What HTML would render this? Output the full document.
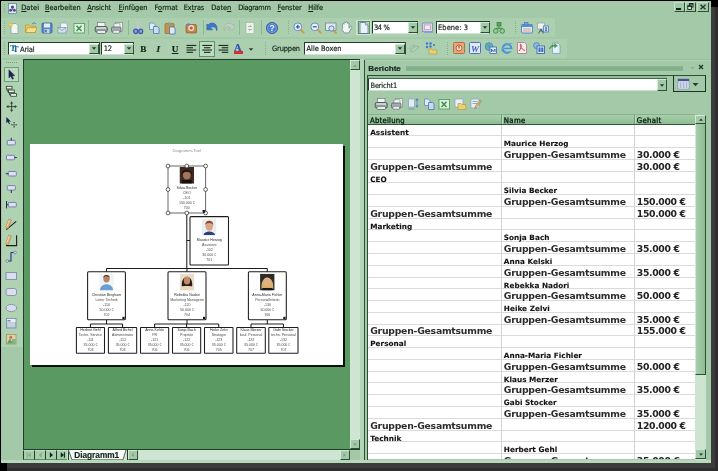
<!DOCTYPE html>
<html lang="de"><head><meta charset="utf-8"><title>Diagramm1 - Berichte</title>
<style>
html,body{margin:0;padding:0}
body{width:718px;height:471px;position:relative;overflow:hidden;background:#000;font-family:"Liberation Sans",sans-serif}
div,span.t,svg.ic{position:absolute;box-sizing:border-box}
span.t{white-space:nowrap;-webkit-text-stroke:0.18px currentColor;filter:blur(0.3px)}
svg.ic{filter:blur(0.35px)}
svg.ti{filter:blur(0.4px);opacity:.86}
.ls{font-family:"Liberation Sans",sans-serif}
.dj{font-family:"DejaVu Sans",sans-serif}
.dc{font-family:"DejaVu Sans Condensed","DejaVu Sans",sans-serif}
.se{font-family:"Liberation Serif",serif}
u{text-decoration:underline;text-underline-offset:1px}
</style></head><body>

<div style="left:7px;top:7px;width:711px;height:464px;background:#3c3c3c;"></div>
<div style="left:715px;top:7px;width:3px;height:464px;background:#2e2e2e;"></div>
<div style="left:7px;top:468px;width:711px;height:3px;background:#2e2e2e;"></div>
<div style="left:1px;top:1px;width:710px;height:462px;background:#a3c9a8;"></div>
<div style="left:1px;top:18px;width:554px;height:19px;background:#acd0af;"></div>
<div style="left:1px;top:39px;width:566px;height:19px;background:#acd0af;"></div>
<div style="left:4px;top:4px;width:1px;height:1px;background:#7fae86;"></div>
<div style="left:4px;top:6px;width:1px;height:1px;background:#7fae86;"></div>
<div style="left:4px;top:8px;width:1px;height:1px;background:#7fae86;"></div>
<div style="left:4px;top:10px;width:1px;height:1px;background:#7fae86;"></div>
<div style="left:4px;top:12px;width:1px;height:1px;background:#7fae86;"></div>
<svg class="ic ti" style="left:5.5px;top:2.0px;" width="13" height="13" viewBox="0 0 13 13"><rect x="2.5" y="1.5" width="8" height="10" fill="#f4f8ff" stroke="#5a7aa8" stroke-width="0.8"/><circle cx="6.5" cy="5" r="1.6" fill="#2a3f9a"/><circle cx="4.6" cy="8.3" r="1.5" fill="#2a3f9a"/><circle cx="8.4" cy="8.3" r="1.5" fill="#2a3f9a"/><circle cx="6.5" cy="7" r="1" fill="#d03030"/></svg>
<span class="t dc" style="left:21.25px;top:3px;font-size:7.3px;line-height:9.3px;font-weight:normal;color:#14241a;letter-spacing:0.045px;"><u>D</u>atei</span>
<span class="t dc" style="left:45px;top:3px;font-size:7.3px;line-height:9.3px;font-weight:normal;color:#14241a;letter-spacing:-0.059px;"><u>B</u>earbeiten</span>
<span class="t dc" style="left:87.25px;top:3px;font-size:7.3px;line-height:9.3px;font-weight:normal;color:#14241a;letter-spacing:-0.071px;"><u>A</u>nsicht</span>
<span class="t dc" style="left:118.5px;top:3px;font-size:7.3px;line-height:9.3px;font-weight:normal;color:#14241a;letter-spacing:0.002px;"><u>E</u>infügen</span>
<span class="t dc" style="left:154.5px;top:3px;font-size:7.3px;line-height:9.3px;font-weight:normal;color:#14241a;letter-spacing:0.066px;">F<u>o</u>rmat</span>
<span class="t dc" style="left:183.75px;top:3px;font-size:7.3px;line-height:9.3px;font-weight:normal;color:#14241a;letter-spacing:-0.042px;">Ex<u>t</u>ras</span>
<span class="t dc" style="left:211.25px;top:3px;font-size:7.3px;line-height:9.3px;font-weight:normal;color:#14241a;letter-spacing:0.028px;">Date<u>n</u></span>
<span class="t dc" style="left:238.25px;top:3px;font-size:7.3px;line-height:9.3px;font-weight:normal;color:#14241a;letter-spacing:-0.293px;">Diagramm</span>
<span class="t dc" style="left:277.5px;top:3px;font-size:7.3px;line-height:9.3px;font-weight:normal;color:#14241a;letter-spacing:-0.010px;"><u>F</u>enster</span>
<span class="t dc" style="left:308.25px;top:3px;font-size:7.3px;line-height:9.3px;font-weight:normal;color:#14241a;letter-spacing:-0.039px;"><u>H</u>ilfe</span>
<div style="left:674px;top:2px;width:11px;height:10px;background:#a3c9a8;border-right:1px solid #2c4f35;border-bottom:1px solid #2c4f35;border-left:1px solid #c3dfc6;border-top:1px solid #c3dfc6;"></div>
<div style="left:676px;top:8px;width:5px;height:2px;background:#10251a;"></div>
<div style="left:685px;top:2px;width:11px;height:10px;background:#a3c9a8;border-right:1px solid #2c4f35;border-bottom:1px solid #2c4f35;border-left:1px solid #c3dfc6;border-top:1px solid #c3dfc6;"></div>
<svg class="ic" style="left:685px;top:2px" width="11" height="10" viewBox="0 0 11 10"><rect x="4.400" y="1.900" width="3.600" height="3.200" fill="none" stroke="#10251a" stroke-width="0.900"/><path d="M4 1.700h4.400" stroke="#10251a" stroke-width="1.200"/><rect x="2.800" y="4.200" width="3.600" height="3.200" fill="#dfeee1" stroke="#10251a" stroke-width="0.900"/><path d="M2.400 4h4.400" stroke="#10251a" stroke-width="1.200"/></svg>
<div style="left:697px;top:2px;width:12px;height:10px;background:#a3c9a8;border-right:1px solid #2c4f35;border-bottom:1px solid #2c4f35;border-left:1px solid #c3dfc6;border-top:1px solid #c3dfc6;"></div>
<svg class="ic ti" style="left:698.5px;top:2.6px;" width="8" height="8" viewBox="0 0 8 8"><path d="M1.500 1.700L6.500 6.300M6.500 1.700L1.500 6.300" stroke="#10251a" stroke-width="1.500"/></svg>
<div style="left:4px;top:21px;width:1px;height:1px;background:#84b08b;"></div>
<div style="left:4px;top:23px;width:1px;height:1px;background:#84b08b;"></div>
<div style="left:4px;top:25px;width:1px;height:1px;background:#84b08b;"></div>
<div style="left:4px;top:27px;width:1px;height:1px;background:#84b08b;"></div>
<div style="left:4px;top:29px;width:1px;height:1px;background:#84b08b;"></div>
<div style="left:4px;top:31px;width:1px;height:1px;background:#84b08b;"></div>
<div style="left:4px;top:33px;width:1px;height:1px;background:#84b08b;"></div>
<svg class="ic ti" style="left:7.0px;top:20.7px;" width="14" height="14" viewBox="0 0 14 14"><path d="M4 2.5h5l2 2v8H4z" fill="#fdfdfd" stroke="#8a9bb8" stroke-width="0.8"/><path d="M3.5 1l.8 1.7 1.8.3-1.3 1.2.3 1.8-1.6-.9-1.6.9.3-1.8L.9 3l1.8-.3z" fill="#ffd84a" stroke="#e0a800" stroke-width="0.4"/></svg>
<svg class="ic ti" style="left:24.0px;top:20.7px;" width="14" height="14" viewBox="0 0 14 14"><path d="M1.5 4h4l1 1.2h5v6.3h-10z" fill="#f4c64a" stroke="#b88a1a" stroke-width="0.7"/><path d="M1.5 11.5l2-4.8h9.5l-2 4.8z" fill="#ffe38a" stroke="#b88a1a" stroke-width="0.7"/><path d="M8 3c1.5-1.5 3-1.500 4 0" stroke="#3b6fd0" fill="none" stroke-width="0.9"/></svg>
<svg class="ic ti" style="left:40.0px;top:20.7px;" width="14" height="14" viewBox="0 0 14 14"><rect x="2" y="2" width="10" height="10" rx="1" fill="#4b7fd6" stroke="#2a4f9a" stroke-width="0.8"/><rect x="4" y="2.5" width="6" height="4" fill="#eef3ff"/><rect x="4.500" y="8" width="5" height="4" fill="#c8d4ea"/><rect x="5.200" y="8.800" width="1.500" height="2.600" fill="#2a4f9a"/></svg>
<svg class="ic ti" style="left:56.0px;top:20.7px;" width="14" height="14" viewBox="0 0 14 14"><path d="M4.500 2h5l2 2v6.500h-7z" fill="#fafcff" stroke="#8a9bb8" stroke-width="0.7"/><rect x="2" y="6.500" width="8" height="5.500" fill="#dfe8f6" stroke="#6f86b0" stroke-width="0.7"/><path d="M2 6.500l4 3 4-3" fill="none" stroke="#6f86b0" stroke-width="0.7"/></svg>
<svg class="ic ti" style="left:72.0px;top:20.7px;" width="14" height="14" viewBox="0 0 14 14"><rect x="2" y="2.500" width="10.500" height="9.500" fill="#eaf6ea" stroke="#4a9a56" stroke-width="0.900"/><path d="M4.500 4.700l5 5.200M9.500 4.700l-5 5.200" stroke="#2a8a3a" stroke-width="1.500"/></svg>
<div style="left:88px;top:20px;width:1px;height:15px;background:#8db793;"></div>
<svg class="ic ti" style="left:94.0px;top:20.7px;" width="14" height="14" viewBox="0 0 14 14"><rect x="3.500" y="1.500" width="7.500" height="4.500" fill="#fdfdfd" stroke="#6a6f78" stroke-width="0.700"/><rect x="1.200" y="5.500" width="12" height="5.500" rx="1.500" fill="#9aa0aa" stroke="#3a3f48" stroke-width="0.900"/><rect x="3" y="9.300" width="8.500" height="3.200" rx="0.800" fill="#f2f2f2" stroke="#4a4f58" stroke-width="0.700"/><rect x="2.300" y="6.300" width="9.800" height="1.400" fill="#e6e9ee"/></svg>
<svg class="ic ti" style="left:110.0px;top:20.7px;" width="14" height="14" viewBox="0 0 14 14"><rect x="5.500" y="1.500" width="7" height="9" fill="#fdfdfd" stroke="#7a7f88" stroke-width="0.700"/><rect x="4" y="2.800" width="6" height="4" fill="#fdfdfd" stroke="#7a7f88" stroke-width="0.600"/><rect x="1.500" y="6" width="9.500" height="5" rx="1.300" fill="#a4aab4" stroke="#4a4f58" stroke-width="0.800"/><rect x="3" y="9.300" width="6.500" height="3" rx="0.600" fill="#f2f2f2" stroke="#5a5f68" stroke-width="0.600"/></svg>
<div style="left:128px;top:20px;width:1px;height:15px;background:#8db793;"></div>
<svg class="ic ti" style="left:131.0px;top:20.7px;" width="14" height="14" viewBox="0 0 14 14"><path d="M5 1.200l3.300 7.300M9.500 1.200l-3.300 7.300" stroke="#c8c4d4" stroke-width="1.500" fill="none"/><ellipse cx="4.700" cy="10.300" rx="2" ry="2.200" fill="#8aa0e0" stroke="#2a48b0" stroke-width="1.300"/><ellipse cx="9.700" cy="10.300" rx="2" ry="2.200" fill="#8aa0e0" stroke="#2a48b0" stroke-width="1.300"/></svg>
<svg class="ic ti" style="left:146.5px;top:20.7px;" width="14" height="14" viewBox="0 0 14 14"><path d="M2.500 2h4l1.500 1.500v5h-5.500z" fill="#e9f0fc" stroke="#5a7fc4" stroke-width="0.8"/><path d="M6.500 5.500h4l1.500 1.500v5.500h-5.500z" fill="#cfe0fa" stroke="#3b66b8" stroke-width="0.8"/></svg>
<svg class="ic ti" style="left:163.0px;top:20.7px;" width="14" height="14" viewBox="0 0 14 14"><rect x="2" y="2.500" width="9" height="10" rx="1" fill="#c98a3a" stroke="#8a5a1a" stroke-width="0.7"/><rect x="4.500" y="1.500" width="4" height="2.200" fill="#8a8f98"/><path d="M6.500 6h4l1.500 1.500v5.500h-5.500z" fill="#e4eefc" stroke="#3b66b8" stroke-width="0.8"/></svg>
<svg class="ic ti" style="left:184.0px;top:20.7px;" width="14" height="14" viewBox="0 0 14 14"><rect x="2" y="3.500" width="10.500" height="8.500" rx="1" fill="#c9783a" stroke="#8a4a1a" stroke-width="0.7"/><circle cx="7.200" cy="7" r="3" fill="#f3e6d8"/><circle cx="7.200" cy="7" r="1.600" fill="#d03a2a"/><circle cx="4.500" cy="3.500" r="1.300" fill="#4a78d0"/></svg>
<div style="left:203px;top:20px;width:1px;height:15px;background:#8db793;"></div>
<svg class="ic ti" style="left:205.8px;top:20.4px;" width="14" height="14" viewBox="0 0 14 14"><g transform="translate(7 7) scale(1.220) translate(-7 -6.500)"><path d="M2 4.200v4.600h4.600l-1.700-1.700c2-1.600 4.700-.9 5.200 2.400.9-3.600-1-6.400-4.200-6.200-1.200.1-2 .6-2.700 1.300z" fill="#2f66d8" stroke="#1d449a" stroke-width="0.500"/></g></svg>
<svg class="ic ti" style="left:220.8px;top:20.4px;" width="14" height="14" viewBox="0 0 14 14"><g transform="translate(7 7) scale(1.200) translate(-7 -6.500)"><path d="M12 4.200v4.600H7.400l1.700-1.700c-2-1.600-4.700-.9-5.200 2.400-.9-3.600 1-6.400 4.200-6.200 1.200.1 2 .6 2.700 1.300z" fill="#c3cfc8" stroke="#98aa9e" stroke-width="0.500"/></g></svg>
<div style="left:239px;top:20px;width:1px;height:15px;background:#8db793;"></div>
<svg class="ic ti" style="left:243.0px;top:20.7px;" width="14" height="14" viewBox="0 0 14 14"><rect x="3" y="1.500" width="8" height="11" fill="#f7faf8" stroke="#a3b3a8" stroke-width="0.7"/><path d="M5 5.500h3.500M8.500 5.500l-1.200-1.200M9 8.500H5.500M5.500 8.500l1.200 1.200" stroke="#8a958d" stroke-width="0.8" fill="none"/></svg>
<div style="left:261px;top:20px;width:1px;height:15px;background:#8db793;"></div>
<svg class="ic ti" style="left:265.0px;top:20.7px;" width="14" height="14" viewBox="0 0 14 14"><circle cx="7" cy="7" r="5.600" fill="#3b6fd8" stroke="#1d3f9a" stroke-width="0.8"/><circle cx="7" cy="7" r="4.300" fill="none" stroke="#9ab8f0" stroke-width="0.6"/><text x="7" y="10" font-size="8.500" font-weight="bold" font-family="Liberation Sans, sans-serif" text-anchor="middle" fill="#fff">?</text></svg>
<div style="left:288px;top:21px;width:1px;height:1px;background:#84b08b;"></div>
<div style="left:288px;top:23px;width:1px;height:1px;background:#84b08b;"></div>
<div style="left:288px;top:25px;width:1px;height:1px;background:#84b08b;"></div>
<div style="left:288px;top:27px;width:1px;height:1px;background:#84b08b;"></div>
<div style="left:288px;top:29px;width:1px;height:1px;background:#84b08b;"></div>
<div style="left:288px;top:31px;width:1px;height:1px;background:#84b08b;"></div>
<div style="left:288px;top:33px;width:1px;height:1px;background:#84b08b;"></div>
<svg class="ic ti" style="left:292.0px;top:20.7px;" width="14" height="14" viewBox="0 0 14 14"><path d="M8.500 8.500l3.800 3.800" stroke="#c89a3a" stroke-width="2"/><circle cx="5.800" cy="5.800" r="3.900" fill="#f2f7ff" stroke="#5a80d0" stroke-width="1"/><path d="M3.800 5.800h4M5.800 3.800v4" stroke="#1d3f9a" stroke-width="1.200"/></svg>
<svg class="ic ti" style="left:309.0px;top:20.7px;" width="14" height="14" viewBox="0 0 14 14"><path d="M8.500 8.500l3.800 3.800" stroke="#c89a3a" stroke-width="2"/><circle cx="5.800" cy="5.800" r="3.900" fill="#f2f7ff" stroke="#5a80d0" stroke-width="1"/><path d="M3.800 5.800h4" stroke="#1d3f9a" stroke-width="1.200"/></svg>
<svg class="ic ti" style="left:324.0px;top:20.7px;" width="14" height="14" viewBox="0 0 14 14"><rect x="1.500" y="2" width="10.500" height="7.500" fill="#e9eef6" stroke="#7a8498" stroke-width="0.900"/><path d="M9.500 9.500l3 3" stroke="#c89a3a" stroke-width="1.800"/><circle cx="7.500" cy="7.500" r="2.600" fill="#dcebff" stroke="#3b66c0" stroke-width="0.9"/></svg>
<svg class="ic ti" style="left:340.3px;top:20.7px;" width="14" height="14" viewBox="0 0 14 14"><path transform="translate(7 7) scale(1.180) translate(-7.300 -7.300)" d="M3.500 7.500V4.200c0-.9 1.300-.9 1.300 0V3c0-.9 1.400-.9 1.400 0v-.5c0-.9 1.400-.9 1.400 0V3.500c0-.9 1.400-.9 1.400 0v4l1.200-1.300c.7-.7 1.700.1 1.100.9l-2.600 4.400H5.200L3 8.800z" fill="#fdfdfd" stroke="#6a7a9a" stroke-width="0.7"/></svg>
<div style="left:356px;top:19.5px;width:15px;height:15.5px;background:#b5d7b8;border:1px solid #cbe5ce;"></div>
<div style="left:357.5px;top:21px;width:12px;height:12.5px;background:#b5d7b8;border:1px solid #5f9069;"></div>
<svg class="ic ti" style="left:357.0px;top:21.2px;" width="14" height="14" viewBox="0 0 14 14"><path d="M3 1.500h5.500l2.500 2.500v8.500h-8z" fill="#f4f8ff" stroke="#4a66a8" stroke-width="0.8"/><path d="M8.500 1.500v2.500h2.500" fill="#cfdcf4" stroke="#4a66a8" stroke-width="0.6"/></svg>
<div style="left:371.5px;top:20.5px;width:46.5px;height:13.0px;background:#fff;border:1px solid #6d9a75;border-top:1.500px solid #1f3d28;border-left:1.500px solid #1f3d28;border-right:1px solid #2c4f35;border-bottom:1px solid #cfe6d2;"></div>
<div style="left:407.5px;top:22.0px;width:10.0px;height:11.0px;background:#a3c9a8;border-right:1px solid #2c4f35;border-bottom:1px solid #2c4f35;border-left:1px solid #d3e8d5;border-top:1px solid #d3e8d5;"></div>
<svg class="ic ti" style="left:409.55px;top:25.0px;" width="6" height="5" viewBox="0 0 6 5"><path d="M0.800 1.300h4.400l-2.200 2.400z" fill="#10251a"/></svg>
<span class="t dc" style="left:374.0px;top:23px;font-size:7.4px;line-height:9.4px;font-weight:normal;color:#14241a;letter-spacing:-0.378px;">34 %</span>
<svg class="ic ti" style="left:421.0px;top:20.7px;" width="14" height="14" viewBox="0 0 14 14"><rect x="1.500" y="2" width="10" height="8.500" fill="#e8d6f0" stroke="#7a86c8" stroke-width="0.9"/><rect x="3.500" y="4" width="6" height="4.500" fill="#f7f0fa" stroke="#c48aa8" stroke-width="0.7"/><rect x="3" y="10.500" width="9" height="1.500" fill="#8a9ad8"/></svg>
<div style="left:435.6px;top:20.5px;width:54.39999999999998px;height:13.0px;background:#fff;border:1px solid #6d9a75;border-top:1.500px solid #1f3d28;border-left:1.500px solid #1f3d28;border-right:1px solid #2c4f35;border-bottom:1px solid #cfe6d2;"></div>
<div style="left:479.5px;top:22.0px;width:10.0px;height:11.0px;background:#a3c9a8;border-right:1px solid #2c4f35;border-bottom:1px solid #2c4f35;border-left:1px solid #d3e8d5;border-top:1px solid #d3e8d5;"></div>
<svg class="ic ti" style="left:481.55px;top:25.0px;" width="6" height="5" viewBox="0 0 6 5"><path d="M0.800 1.300h4.400l-2.200 2.400z" fill="#10251a"/></svg>
<span class="t dc" style="left:438.1px;top:23px;font-size:7.4px;line-height:9.4px;font-weight:normal;color:#14241a;letter-spacing:0.070px;">Ebene: 3</span>
<svg class="ic ti" style="left:492.0px;top:20.7px;" width="14" height="14" viewBox="0 0 14 14"><rect x="5" y="1.500" width="4" height="3.500" fill="#4aa84a" stroke="#1f6a2a" stroke-width="0.7"/><circle cx="3.800" cy="10" r="2.300" fill="#8ad08a" stroke="#1f7a2a" stroke-width="0.8"/><circle cx="10.200" cy="10" r="2.300" fill="#8ad08a" stroke="#1f7a2a" stroke-width="0.8"/><path d="M7 5v2.500M3.800 7.700V7.300h6.400v.4" stroke="#1f6a2a" stroke-width="0.8" fill="none"/></svg>
<div style="left:515px;top:21px;width:1px;height:1px;background:#84b08b;"></div>
<div style="left:515px;top:23px;width:1px;height:1px;background:#84b08b;"></div>
<div style="left:515px;top:25px;width:1px;height:1px;background:#84b08b;"></div>
<div style="left:515px;top:27px;width:1px;height:1px;background:#84b08b;"></div>
<div style="left:515px;top:29px;width:1px;height:1px;background:#84b08b;"></div>
<div style="left:515px;top:31px;width:1px;height:1px;background:#84b08b;"></div>
<div style="left:515px;top:33px;width:1px;height:1px;background:#84b08b;"></div>
<svg class="ic ti" style="left:520.0px;top:20.7px;" width="14" height="14" viewBox="0 0 14 14"><rect x="1.500" y="3.500" width="11" height="8.500" rx="1" fill="#e8f0fc" stroke="#3b6fc8" stroke-width="0.9"/><rect x="1.500" y="3.500" width="11" height="2.500" fill="#4a86e0"/><rect x="4.500" y="1.500" width="3.500" height="2.500" fill="#6a9ae8" stroke="#2a55a8" stroke-width="0.5"/><path d="M3.500 8h7M3.500 10h7" stroke="#d06a5a" stroke-width="1" stroke-dasharray="1.200 0.800"/></svg>
<svg class="ic ti" style="left:536.0px;top:20.7px;" width="14" height="14" viewBox="0 0 14 14"><rect x="1.500" y="2" width="7" height="6" fill="#f6f8fc" stroke="#8a94a8" stroke-width="0.700"/><path d="M5 8l-2.500 4.500M5 8l2.500 4.500M5 8v3" stroke="#4a4f5a" stroke-width="1" fill="none"/><rect x="7.500" y="5" width="5" height="6" fill="#dce8fc" stroke="#3b6fc8" stroke-width="0.800"/><circle cx="10" cy="7" r="0.900" fill="#2a55c0"/><rect x="9.200" y="8.200" width="1.600" height="2" fill="#2a55c0"/></svg>
<div style="left:4px;top:42px;width:1px;height:1px;background:#84b08b;"></div>
<div style="left:4px;top:44px;width:1px;height:1px;background:#84b08b;"></div>
<div style="left:4px;top:46px;width:1px;height:1px;background:#84b08b;"></div>
<div style="left:4px;top:48px;width:1px;height:1px;background:#84b08b;"></div>
<div style="left:4px;top:50px;width:1px;height:1px;background:#84b08b;"></div>
<div style="left:4px;top:52px;width:1px;height:1px;background:#84b08b;"></div>
<div style="left:4px;top:54px;width:1px;height:1px;background:#84b08b;"></div>
<div style="left:7.5px;top:42px;width:92.1px;height:12.700000000000003px;background:#fff;border:1px solid #6d9a75;border-top:1.500px solid #1f3d28;border-left:1.500px solid #1f3d28;border-right:1px solid #2c4f35;border-bottom:1px solid #cfe6d2;"></div>
<div style="left:89.1px;top:43.5px;width:10.0px;height:10.700000000000003px;background:#a3c9a8;border-right:1px solid #2c4f35;border-bottom:1px solid #2c4f35;border-left:1px solid #d3e8d5;border-top:1px solid #d3e8d5;"></div>
<svg class="ic ti" style="left:91.15px;top:46.35px;" width="6" height="5" viewBox="0 0 6 5"><path d="M0.800 1.300h4.400l-2.200 2.400z" fill="#10251a"/></svg>
<span class="t dc" style="left:20.0px;top:45px;font-size:7.6px;line-height:9.6px;font-weight:normal;color:#14241a;letter-spacing:-0.215px;">Arial</span>
<span class="t se" style="left:10px;top:43px;font-size:9px;line-height:11px;font-weight:bold;color:#2a8a8a">T</span>
<span class="t se" style="left:13px;top:45px;font-size:8px;line-height:10px;font-weight:bold;color:#1d5f9a">T</span>
<div style="left:101px;top:42px;width:33px;height:12.700000000000003px;background:#fff;border:1px solid #6d9a75;border-top:1.500px solid #1f3d28;border-left:1.500px solid #1f3d28;border-right:1px solid #2c4f35;border-bottom:1px solid #cfe6d2;"></div>
<div style="left:123.5px;top:43.5px;width:10.0px;height:10.700000000000003px;background:#a3c9a8;border-right:1px solid #2c4f35;border-bottom:1px solid #2c4f35;border-left:1px solid #d3e8d5;border-top:1px solid #d3e8d5;"></div>
<svg class="ic ti" style="left:125.55px;top:46.35px;" width="6" height="5" viewBox="0 0 6 5"><path d="M0.800 1.300h4.400l-2.200 2.400z" fill="#10251a"/></svg>
<span class="t dc" style="left:103.8px;top:44px;font-size:7.6px;line-height:9.6px;font-weight:normal;color:#14241a;letter-spacing:-0.299px;">12</span>
<span class="t se" style="left:140.2px;top:44px;font-size:9.2px;line-height:11.2px;font-weight:bold;color:#10251a;">B</span>
<span class="t se" style="left:156.5px;top:44px;font-size:9.2px;line-height:11.2px;font-weight:bold;color:#10251a;font-style:italic;">I</span>
<span class="t se" style="left:171.8px;top:44px;font-size:9.2px;line-height:11.2px;font-weight:bold;color:#10251a;text-decoration:underline;">U</span>
<svg class="ic" style="left:180px;top:36px" width="60" height="24" viewBox="180 36 60 24"><rect x="186.50" y="44.90" width="9.8" height="1.100" fill="#1a2a1f"/><rect x="186.50" y="47.20" width="6.5" height="1.100" fill="#1a2a1f"/><rect x="186.50" y="49.50" width="9.8" height="1.100" fill="#1a2a1f"/><rect x="186.50" y="51.80" width="6.5" height="1.100" fill="#1a2a1f"/></svg>
<div style="left:199px;top:41px;width:16px;height:16px;background:#bcdcbf;border:1px solid #5f9069;"></div>
<svg class="ic" style="left:180px;top:36px" width="60" height="24" viewBox="180 36 60 24"><rect x="202.30" y="44.90" width="9.8" height="1.100" fill="#1a2a1f"/><rect x="203.95" y="47.20" width="6.5" height="1.100" fill="#1a2a1f"/><rect x="202.30" y="49.50" width="9.8" height="1.100" fill="#1a2a1f"/><rect x="203.95" y="51.80" width="6.5" height="1.100" fill="#1a2a1f"/></svg>
<svg class="ic" style="left:180px;top:36px" width="60" height="24" viewBox="180 36 60 24"><rect x="218.50" y="44.90" width="9.8" height="1.100" fill="#1a2a1f"/><rect x="221.80" y="47.20" width="6.5" height="1.100" fill="#1a2a1f"/><rect x="218.50" y="49.50" width="9.8" height="1.100" fill="#1a2a1f"/><rect x="221.80" y="51.80" width="6.5" height="1.100" fill="#1a2a1f"/></svg>
<span class="t se" style="left:234px;top:42px;font-size:10.5px;line-height:12.5px;font-weight:bold;color:#2a4fb8;">A</span>
<div style="left:234px;top:51px;width:9px;height:3px;background:#d8302a;"></div>
<svg class="ic ti" style="left:248.2px;top:46.8px;" width="6" height="5" viewBox="0 0 6 5"><path d="M0.800 1.300h4.400l-2.200 2.400z" fill="#10251a"/></svg>
<div style="left:265px;top:42px;width:1px;height:1px;background:#84b08b;"></div>
<div style="left:265px;top:44px;width:1px;height:1px;background:#84b08b;"></div>
<div style="left:265px;top:46px;width:1px;height:1px;background:#84b08b;"></div>
<div style="left:265px;top:48px;width:1px;height:1px;background:#84b08b;"></div>
<div style="left:265px;top:50px;width:1px;height:1px;background:#84b08b;"></div>
<div style="left:265px;top:52px;width:1px;height:1px;background:#84b08b;"></div>
<div style="left:265px;top:54px;width:1px;height:1px;background:#84b08b;"></div>
<span class="t dc" style="left:272px;top:44px;font-size:7.4px;line-height:9.4px;font-weight:normal;color:#14241a;letter-spacing:-0.127px;">Gruppen</span>
<div style="left:304px;top:42px;width:101.5px;height:12.700000000000003px;background:#fff;border:1px solid #6d9a75;border-top:1.500px solid #1f3d28;border-left:1.500px solid #1f3d28;border-right:1px solid #2c4f35;border-bottom:1px solid #cfe6d2;"></div>
<div style="left:395.0px;top:43.5px;width:10.0px;height:10.700000000000003px;background:#a3c9a8;border-right:1px solid #2c4f35;border-bottom:1px solid #2c4f35;border-left:1px solid #d3e8d5;border-top:1px solid #d3e8d5;"></div>
<svg class="ic ti" style="left:397.05px;top:46.35px;" width="6" height="5" viewBox="0 0 6 5"><path d="M0.800 1.300h4.400l-2.200 2.400z" fill="#10251a"/></svg>
<span class="t dc" style="left:306.5px;top:44px;font-size:7.4px;line-height:9.4px;font-weight:normal;color:#14241a;letter-spacing:0.010px;">Alle Boxen</span>
<svg class="ic ti" style="left:407.0px;top:41.4px;" width="14" height="14" viewBox="0 0 14 14"><path d="M2 7l2 .500M4 4.500l1.500 2M7 3v3M3 10l6-5 3 1-6 5z" stroke="#8fb096" stroke-width="1" fill="#b8d0bc"/></svg>
<svg class="ic ti" style="left:424.0px;top:41.4px;" width="14" height="14" viewBox="0 0 14 14"><circle cx="3" cy="2.500" r="1.200" fill="#2f66d8"/><circle cx="6.500" cy="2.500" r="1.200" fill="#2f66d8"/><circle cx="3" cy="6" r="1.200" fill="#2f66d8"/><circle cx="6.500" cy="5.500" r="1.200" fill="#2f66d8"/><circle cx="10" cy="4" r="1.100" fill="#2f66d8"/><path d="M5 8h3l.8 1h4v4H5z" fill="#f6d26a" stroke="#b88a1a" stroke-width="0.6"/></svg>
<div style="left:447px;top:42px;width:1px;height:1px;background:#84b08b;"></div>
<div style="left:447px;top:44px;width:1px;height:1px;background:#84b08b;"></div>
<div style="left:447px;top:46px;width:1px;height:1px;background:#84b08b;"></div>
<div style="left:447px;top:48px;width:1px;height:1px;background:#84b08b;"></div>
<div style="left:447px;top:50px;width:1px;height:1px;background:#84b08b;"></div>
<div style="left:447px;top:52px;width:1px;height:1px;background:#84b08b;"></div>
<div style="left:447px;top:54px;width:1px;height:1px;background:#84b08b;"></div>
<svg class="ic ti" style="left:452.0px;top:41.4px;" width="14" height="14" viewBox="0 0 14 14"><rect x="1.500" y="1.500" width="11" height="11" rx="1" fill="#f0a070" stroke="#b8502a" stroke-width="0.9"/><circle cx="7" cy="7" r="3" fill="#fbe0d0" stroke="#c8502a" stroke-width="1"/><rect x="6.300" y="4.500" width="1.400" height="3" fill="#c8502a"/></svg>
<svg class="ic ti" style="left:468.0px;top:41.4px;" width="14" height="14" viewBox="0 0 14 14"><rect x="1.500" y="1.500" width="11" height="11" rx="1" fill="#e8f0fc" stroke="#2a55b8" stroke-width="0.9"/><text x="7" y="10.500" font-size="9" font-weight="bold" font-style="italic" font-family="Liberation Serif, serif" text-anchor="middle" fill="#2a4fc0">W</text></svg>
<svg class="ic ti" style="left:484.0px;top:41.4px;" width="14" height="14" viewBox="0 0 14 14"><circle cx="5" cy="5.500" r="3.800" fill="#5aa8e0" stroke="#2a66a8" stroke-width="0.7"/><path d="M3 4c1-1 2.500-.500 3 .500s-1 2-2 2z" fill="#4aa84a"/><rect x="6" y="6" width="6.500" height="6.500" fill="#e8f0fc" stroke="#2a55b8" stroke-width="0.8"/><path d="M7.500 11V8l1.700 2.500L11 8v3" stroke="#2a4fc0" stroke-width="0.900" fill="none"/></svg>
<svg class="ic ti" style="left:500.0px;top:41.4px;" width="14" height="14" viewBox="0 0 14 14"><circle cx="7" cy="7.500" r="4.300" fill="none" stroke="#3b8ae0" stroke-width="2.200"/><rect x="4" y="6.800" width="7" height="1.400" fill="#3b8ae0"/><path d="M1.500 10c1-5 8-9 11-7" stroke="#5aa0e8" stroke-width="1" fill="none"/><rect x="8" y="8.300" width="4.500" height="2" fill="#afd2b2"/></svg>
<svg class="ic ti" style="left:515.0px;top:41.4px;" width="14" height="14" viewBox="0 0 14 14"><path d="M2.500 1.500h7l2 2v9h-9z" fill="#fdf3f6" stroke="#c05a8a" stroke-width="0.8"/><path d="M4 10c2-2 2.500-5 2-6.500-.300-1-1.200 0-.500 1.700.8 2 2.500 3.800 4.500 4.300" stroke="#d02a3a" stroke-width="1" fill="none"/></svg>
<svg class="ic ti" style="left:532.0px;top:41.4px;" width="14" height="14" viewBox="0 0 14 14"><circle cx="4.500" cy="4.500" r="3" fill="#8ab8e8" stroke="#2a66a8" stroke-width="0.700"/><rect x="5" y="5" width="7.500" height="7.500" fill="#e8f0fc" stroke="#2a55b8" stroke-width="0.9"/><rect x="6.500" y="6.500" width="2" height="4.500" fill="#2a55c0"/><rect x="9.300" y="6.500" width="2" height="4.500" fill="#2a55c0"/></svg>
<svg class="ic ti" style="left:548.0px;top:41.4px;" width="14" height="14" viewBox="0 0 14 14"><path d="M4.500 2h5.500l2 2v8.500h-7.500z" fill="#eef6ff" stroke="#6a9ac8" stroke-width="0.8"/><path d="M1.500 8c.500-3 3-4.500 5.500-4l-.500-1.500 3 2.300-3 2 .4-1.400c-2-.300-4 .4-5.400 2.600z" fill="#2f9a3f" stroke="#1a6a2a" stroke-width="0.400"/></svg>
<div style="left:2px;top:60px;width:21px;height:287px;background:#afd2b2;"></div>
<div style="left:6px;top:62px;width:1px;height:1px;background:#6f9f77;"></div>
<div style="left:8px;top:62px;width:1px;height:1px;background:#6f9f77;"></div>
<div style="left:10px;top:62px;width:1px;height:1px;background:#6f9f77;"></div>
<div style="left:12px;top:62px;width:1px;height:1px;background:#6f9f77;"></div>
<div style="left:14px;top:62px;width:1px;height:1px;background:#6f9f77;"></div>
<div style="left:16px;top:62px;width:1px;height:1px;background:#6f9f77;"></div>
<div style="left:3.5px;top:66.5px;width:15.5px;height:15.5px;background:#bcdcbf;border:1px solid #6f9f78;"></div>
<svg class="ic ti" style="left:6.36px;top:69.06px;" width="11.48" height="11.48" viewBox="0 0 14 14"><path d="M3.500 0.800v10.200l2.400-2.200 1.700 3.800 1.700-.800-1.700-3.700h3.300z" fill="#04043c" stroke="#04043c" stroke-width="0.500"/></svg>
<svg class="ic ti" style="left:5.34px;top:84.64px;" width="12.32" height="12.32" viewBox="0 0 14 14"><rect x="1.500" y="1.500" width="6.500" height="3" fill="#f4f8f5" stroke="#14241a" stroke-width="0.900"/><rect x="4" y="5.700" width="6.500" height="3" fill="#f4f8f5" stroke="#14241a" stroke-width="0.900"/><rect x="6.500" y="9.800" width="6.500" height="3" fill="#f4f8f5" stroke="#14241a" stroke-width="0.900"/><path d="M2.500 4.500v2.700H4M5 8.700v2.600h1.500" stroke="#14241a" stroke-width="0.900" fill="none"/></svg>
<svg class="ic ti" style="left:5.6px;top:100.7px;" width="11.2" height="11.2" viewBox="0 0 14 14"><path d="M7 1v12M1 7h12" stroke="#14241a" stroke-width="1.100"/><path d="M7 0.500l-2 2.500h4zM7 13.500l-2-2.500h4zM0.500 7l2.500-2v4zM13.500 7l-2.500-2v4z" fill="#14241a"/></svg>
<svg class="ic ti" style="left:4.9px;top:116.0px;" width="12.6" height="12.6" viewBox="0 0 14 14"><path d="M1.500 1v7l1.700-1.500 1.300 2.700 1.100-.500-1.300-2.700h2.300z" fill="#04043c"/><g transform="translate(6.600,6.300) scale(0.500)"><path d="M7 1v12M1 7h12" stroke="#14241a" stroke-width="1.100"/><path d="M7 0.500l-2 2.500h4zM7 13.500l-2-2.500h4zM0.500 7l2.500-2v4zM13.500 7l-2.500-2v4z" fill="#14241a"/></g></svg>
<svg class="ic" style="left:0px;top:132px" width="23" height="82" viewBox="0 132 23 82"><rect x="7.3" y="140.4" width="8" height="4.5" rx="0.700" fill="#dce2f0" stroke="#6e78a4" stroke-width="0.900"/><path d="M11.300 137.800v2.600" stroke="#2a2f4a" stroke-width="1"/><rect x="6.5" y="155.3" width="8" height="4.5" rx="0.700" fill="#dce2f0" stroke="#6e78a4" stroke-width="0.900"/><path d="M14.500 157.500h2.300" stroke="#2a2f4a" stroke-width="1"/><rect x="8.3" y="171.5" width="8" height="4.5" rx="0.700" fill="#dce2f0" stroke="#6e78a4" stroke-width="0.900"/><path d="M5.800 173.700h2.500" stroke="#2a2f4a" stroke-width="1"/><rect x="7.3" y="185.6" width="8" height="4.5" rx="0.700" fill="#dce2f0" stroke="#6e78a4" stroke-width="0.900"/><path d="M11.300 190.100v2.900" stroke="#2a2f4a" stroke-width="1"/><rect x="8.3" y="202.4" width="8" height="4.5" rx="0.700" fill="#dce2f0" stroke="#6e78a4" stroke-width="0.900"/><path d="M6.500 204.700h1.800M6.500 201v7.400" stroke="#2a2f4a" stroke-width="1"/></svg>
<svg class="ic" style="left:0px;top:214px" width="23" height="56" viewBox="0 214 23 56"><path d="M6.300 229.700L16.200 221.400" stroke="#1a1a1a" stroke-width="1.100"/><path d="M8.800 219l2.600 .900-2.900 8.200-2.300 .600-.300-1.500z" fill="#e6ae72" stroke="#a8743a" stroke-width="0.500"/><path d="M9.300 219.800l-2.500 7.200" stroke="#f6dcb4" stroke-width="0.800"/><path d="M6 245.600h10.600v-10.300" stroke="#1a1a1a" stroke-width="1.100" fill="none"/><path d="M8.800 235l2.600 .900-2.900 8.200-2.300 .600-.300-1.500z" fill="#e6ae72" stroke="#a8743a" stroke-width="0.500"/><path d="M9.300 235.800l-2.500 7.200" stroke="#f6dcb4" stroke-width="0.800"/><path d="M7.500 261h3.500v-8.500h3.800" stroke="#2a3a5a" stroke-width="1.100" fill="none"/><path d="M11 254.500v4" stroke="#3a7ad8" stroke-width="1.100"/><circle cx="7.200" cy="261" r="1.300" fill="#e8eefa" stroke="#4a5a8a" stroke-width="0.600"/><circle cx="15" cy="252.500" r="1.300" fill="#cfe0fa" stroke="#4a6ab0" stroke-width="0.600"/></svg>
<svg class="ic ti" style="left:4.3px;top:268.8px;" width="15" height="15" viewBox="0 0 15 15"><rect x="2" y="3.500" width="10.500" height="7" fill="#e0e3f2" stroke="#8088b2" stroke-width="1"/></svg>
<svg class="ic ti" style="left:4.0px;top:284.5px;" width="15" height="15" viewBox="0 0 15 15"><rect x="2" y="3.500" width="10.500" height="7" rx="2" fill="#e0e3f2" stroke="#8088b2" stroke-width="1"/></svg>
<svg class="ic ti" style="left:4.0px;top:300.5px;" width="15" height="15" viewBox="0 0 15 15"><ellipse cx="7.300" cy="7" rx="5.300" ry="3.600" fill="#e0e3f2" stroke="#8088b2" stroke-width="1"/></svg>
<svg class="ic ti" style="left:4.3px;top:316.2px;" width="15" height="15" viewBox="0 0 15 15"><rect x="2.500" y="2.500" width="9.500" height="9.500" fill="#b4c4e0" stroke="#6a7eb0" stroke-width="0.800"/><rect x="3" y="3" width="8.500" height="3.200" fill="#f4f6fb"/><rect x="3.500" y="4" width="3" height="1.500" fill="#6a7eb0"/><path d="M3.500 8h7.500M3.500 10h7.500" stroke="#e8ecf6" stroke-width="0.800"/></svg>
<svg class="ic ti" style="left:4.3px;top:332.3px;" width="15" height="15" viewBox="0 0 15 15"><rect x="2.500" y="2.500" width="9.500" height="9.500" fill="#e6d2a8" stroke="#a08a5a" stroke-width="0.800"/><path d="M3 11.500l2.800-5 2.200 3.500 1.500-2 2 3.500z" fill="#4a9a4a"/><circle cx="6.800" cy="5.200" r="1.500" fill="#d05a4a"/><rect x="8" y="7" width="3.500" height="4.500" fill="#7ab07a"/></svg>
<div style="left:23px;top:59px;width:327px;height:390px;background:#5a9962;border-left:1px solid #1f3d28;border-top:1px solid #1f3d28;"></div>
<div style="left:32px;top:146px;width:313px;height:220.5px;background:#0a0f0b;"></div>
<div style="left:30px;top:144px;width:313px;height:221px;background:#fff;"></div>
<span class="t ls" style="left:172.5px;top:148px;font-size:4.2px;line-height:6.2px;font-weight:normal;color:#8a8f8b;-webkit-text-stroke:0;">Diagramm-Titel</span>
<div style="left:350px;top:59px;width:10px;height:390px;background:#cfe5d3;border-top:1px solid #1f3d28;"></div>
<div style="left:350px;top:60px;width:10px;height:10px;background:#a3c9a8;border-right:1px solid #2c4f35;border-bottom:1px solid #2c4f35;border-left:1px solid #d3e8d5;border-top:1px solid #d3e8d5;"></div>
<svg class="ic ti" style="left:352.0px;top:62.5px;" width="6" height="5" viewBox="0 0 6 5"><path d="M1 3.700h4l-2-2.200z" fill="#6f9a78"/></svg>
<div style="left:350px;top:439px;width:10px;height:10px;background:#a3c9a8;border-right:1px solid #2c4f35;border-bottom:1px solid #2c4f35;border-left:1px solid #d3e8d5;border-top:1px solid #d3e8d5;"></div>
<svg class="ic ti" style="left:352.0px;top:441.5px;" width="6" height="5" viewBox="0 0 6 5"><path d="M1 1.500h4l-2 2.200z" fill="#6f9a78"/></svg>
<div style="left:23px;top:449px;width:337px;height:11px;background:#cfe5d3;"></div>
<div style="left:23px;top:449px;width:337px;height:1px;background:#1f3d28;"></div>
<div style="left:23.4px;top:450px;width:11px;height:10px;background:#a9cead;border-left:1px solid #1f3d28;border-bottom:1px solid #5f8f68;border-top:1px solid #c3dfc6;"></div>
<svg class="ic" style="left:20px;top:449px" width="60" height="12" viewBox="20 449 60 12"><path d="M30.9 452.200v5.600l-3.200-2.800z" fill="#86b08d"/><rect x="26.7" y="452.200" width="1.100" height="5.600" fill="#86b08d"/></svg>
<div style="left:34.349999999999994px;top:450px;width:11px;height:10px;background:#a9cead;border-left:1px solid #1f3d28;border-bottom:1px solid #5f8f68;border-top:1px solid #c3dfc6;"></div>
<svg class="ic" style="left:20px;top:449px" width="60" height="12" viewBox="20 449 60 12"><path d="M41.849999999999994 452.200v5.600l-3.200-2.800z" fill="#86b08d"/></svg>
<div style="left:45.3px;top:450px;width:11px;height:10px;background:#a9cead;border-left:1px solid #1f3d28;border-bottom:1px solid #5f8f68;border-top:1px solid #c3dfc6;"></div>
<svg class="ic" style="left:20px;top:449px" width="60" height="12" viewBox="20 449 60 12"><path d="M49.8 452.200v5.600l3.200-2.800z" fill="#10251a"/></svg>
<div style="left:56.24999999999999px;top:450px;width:11px;height:10px;background:#a9cead;border-left:1px solid #1f3d28;border-bottom:1px solid #5f8f68;border-top:1px solid #c3dfc6;"></div>
<svg class="ic" style="left:20px;top:449px" width="60" height="12" viewBox="20 449 60 12"><path d="M60.74999999999999 452.200v5.600l3.200-2.800z" fill="#10251a"/><rect x="63.849999999999994" y="452.200" width="1.100" height="5.600" fill="#10251a"/></svg>
<div style="left:68px;top:450px;width:1px;height:10px;background:#1f3d28;"></div>
<svg class="ic ti" style="left:68.0px;top:450.0px;" width="59" height="10" viewBox="0 0 59 10"><path d="M0 0h58l-3 10H4z" fill="#fff"/><path d="M0.500 0l3.500 9.800h51L58 0" fill="none" stroke="#14241a" stroke-width="0.800"/></svg>
<span class="t ls" style="left:74.2px;top:451px;font-size:8.25px;line-height:10.25px;font-weight:bold;color:#10251a;letter-spacing:0.007px;">Diagramm1</span>
<div style="left:127px;top:450px;width:1px;height:10px;background:#1f3d28;"></div>
<div style="left:128px;top:450px;width:10px;height:10px;background:#a3c9a8;border-right:1px solid #2c4f35;border-bottom:1px solid #2c4f35;border-left:1px solid #d3e8d5;border-top:1px solid #d3e8d5;"></div>
<svg class="ic ti" style="left:130.0px;top:452.0px;" width="6" height="6" viewBox="0 0 6 6"><path d="M3.700 1v4l-2.200-2z" fill="#6f9a78"/></svg>
<div style="left:340px;top:450px;width:10px;height:10px;background:#a3c9a8;border-right:1px solid #2c4f35;border-bottom:1px solid #2c4f35;border-left:1px solid #d3e8d5;border-top:1px solid #d3e8d5;"></div>
<svg class="ic ti" style="left:342.0px;top:452.0px;" width="6" height="6" viewBox="0 0 6 6"><path d="M1.500 1v4l2.200-2z" fill="#6f9a78"/></svg>
<div style="left:350px;top:450px;width:10px;height:10px;background:#a3c9a8;"></div>
<svg class="ic ls" style="left:30px;top:144px" width="314" height="221" viewBox="30 144 314 221"><defs><filter id="pb" x="-20%" y="-20%" width="140%" height="140%"><feGaussianBlur stdDeviation="0.550"/></filter></defs><path d="M186.8 213L186.8 268.5" stroke="#1c1c1c" stroke-width="1.05" fill="none"/><path d="M186.8 240.5L190 240.5" stroke="#1c1c1c" stroke-width="1.05" fill="none"/><path d="M106.5 268.5L267.3 268.5" stroke="#1c1c1c" stroke-width="1.05" fill="none"/><path d="M106.5 268.5L106.5 272" stroke="#1c1c1c" stroke-width="1.05" fill="none"/><path d="M187 268.5L187 272" stroke="#1c1c1c" stroke-width="1.05" fill="none"/><path d="M267.3 268.5L267.3 272" stroke="#1c1c1c" stroke-width="1.05" fill="none"/><path d="M106.5 320L106.5 324" stroke="#1c1c1c" stroke-width="1.05" fill="none"/><path d="M90.45 324L122.55 324" stroke="#1c1c1c" stroke-width="1.05" fill="none"/><path d="M90.45 324L90.45 327.4" stroke="#1c1c1c" stroke-width="1.05" fill="none"/><path d="M122.55 324L122.55 327.4" stroke="#1c1c1c" stroke-width="1.05" fill="none"/><path d="M187 320L187 324" stroke="#1c1c1c" stroke-width="1.05" fill="none"/><path d="M154.6 324L218.75 324" stroke="#1c1c1c" stroke-width="1.05" fill="none"/><path d="M154.6 324L154.6 327.4" stroke="#1c1c1c" stroke-width="1.05" fill="none"/><path d="M186.6 324L186.6 327.4" stroke="#1c1c1c" stroke-width="1.05" fill="none"/><path d="M218.75 324L218.75 327.4" stroke="#1c1c1c" stroke-width="1.05" fill="none"/><path d="M267.3 320L267.3 324" stroke="#1c1c1c" stroke-width="1.05" fill="none"/><path d="M251.0 324L283.4 324" stroke="#1c1c1c" stroke-width="1.05" fill="none"/><path d="M251.0 324L251.0 327.4" stroke="#1c1c1c" stroke-width="1.05" fill="none"/><path d="M283.4 324L283.4 327.4" stroke="#1c1c1c" stroke-width="1.05" fill="none"/><rect x="168" y="166" width="37.60" height="47.00" rx="1" fill="#fff" stroke="#555" stroke-width="0.9"/><clipPath id="pc1"><rect x="179.50" y="166.90" width="14.6" height="16.8"/></clipPath><g clip-path="url(#pc1)"><g filter="url(#pb)"><rect x="179.5" y="166.9" width="14.6" height="16.8" fill="#3a2a22"/><ellipse cx="186.8" cy="174.964" rx="3.942" ry="4.5360000000000005" fill="#a8735c"/><path d="M181.69 176.14000000000001C180.96 167.74 192.64 167.74 191.91 176.14000000000001C191.18 170.26000000000002 182.42 170.26000000000002 181.69 176.14000000000001z" fill="#1a1210"/><rect x="181.69" y="180.00400000000002" width="10.219999999999999" height="3.696" fill="#15110f"/></g></g><text transform="translate(186.80 189.25) scale(0.1)" font-size="35.500" text-anchor="middle" fill="#2a2a2a">Silvia Becker</text><text transform="translate(186.80 194.23) scale(0.1)" font-size="35.500" text-anchor="middle" fill="#4a4a4a">CEO</text><text transform="translate(186.80 199.21) scale(0.1)" font-size="35.500" text-anchor="middle" fill="#4a4a4a">-101</text><text transform="translate(186.80 204.19) scale(0.1)" font-size="35.500" text-anchor="middle" fill="#4a4a4a">150.000 €</text><text transform="translate(186.80 209.17) scale(0.1)" font-size="35.500" text-anchor="middle" fill="#4a4a4a">700</text><rect x="202.6" y="210" width="2.200" height="2.200" fill="#111"/><rect x="190" y="216.6" width="38.50" height="48.40" rx="1" fill="#fff" stroke="#1c1c1c" stroke-width="1.05"/><clipPath id="pc2"><rect x="201.95" y="218.50" width="14.6" height="16.8"/></clipPath><g clip-path="url(#pc2)"><g filter="url(#pb)"><rect x="201.95" y="218.5" width="14.6" height="16.8" fill="#e9eef2"/><ellipse cx="209.25" cy="226.06" rx="3.796" ry="4.704000000000001" fill="#d9a585"/><path d="M205.16199999999998 225.22C204.86999999999998 219.34 213.63 219.34 213.338 225.22C212.17 222.196 206.32999999999998 222.196 205.16199999999998 225.22z" fill="#8a4a2a"/><path d="M203.41 235.3C204.14 230.26 214.35999999999999 230.26 215.08999999999997 235.3z" fill="#2a3f7a"/></g></g><text transform="translate(209.25 240.95) scale(0.1)" font-size="35.500" text-anchor="middle" fill="#2a2a2a">Maurice Herzog</text><text transform="translate(209.25 246.00) scale(0.1)" font-size="35.500" text-anchor="middle" fill="#4a4a4a">Assistent</text><text transform="translate(209.25 251.05) scale(0.1)" font-size="35.500" text-anchor="middle" fill="#4a4a4a">-102</text><text transform="translate(209.25 256.10) scale(0.1)" font-size="35.500" text-anchor="middle" fill="#4a4a4a">30.000 €</text><text transform="translate(209.25 261.15) scale(0.1)" font-size="35.500" text-anchor="middle" fill="#4a4a4a">701</text><rect x="87.6" y="271.8" width="37.80" height="48.00" rx="1" fill="#fff" stroke="#1c1c1c" stroke-width="1.05"/><clipPath id="pc3"><rect x="99.20" y="273.70" width="14.6" height="16.8"/></clipPath><g clip-path="url(#pc3)"><g filter="url(#pb)"><rect x="99.2" y="273.7" width="14.6" height="16.8" fill="#eef3f8"/><ellipse cx="106.5" cy="278.74" rx="3.2119999999999997" ry="3.696" fill="#b88560"/><path d="M103.288 277.9C102.85000000000001 274.036 110.15 274.036 109.712 277.9C108.69 275.716 104.31 275.716 103.288 277.9z" fill="#4a3526"/><path d="M99.93 290.5C99.93 282.09999999999997 113.07000000000001 282.09999999999997 113.07000000000001 290.5z" fill="#6a9fd4"/></g></g><text transform="translate(106.50 296.15) scale(0.1)" font-size="35.500" text-anchor="middle" fill="#2a2a2a">Christian Berghorn</text><text transform="translate(106.50 301.20) scale(0.1)" font-size="35.500" text-anchor="middle" fill="#4a4a4a">Leiter Technik</text><text transform="translate(106.50 306.25) scale(0.1)" font-size="35.500" text-anchor="middle" fill="#4a4a4a">-110</text><text transform="translate(106.50 311.30) scale(0.1)" font-size="35.500" text-anchor="middle" fill="#4a4a4a">50.000 €</text><text transform="translate(106.50 316.35) scale(0.1)" font-size="35.500" text-anchor="middle" fill="#4a4a4a">702</text><rect x="122.4" y="316.8" width="2.200" height="2.200" fill="#111"/><rect x="168" y="271.8" width="38.00" height="48.00" rx="1" fill="#fff" stroke="#1c1c1c" stroke-width="1.05"/><clipPath id="pc4"><rect x="179.70" y="273.70" width="14.6" height="16.8"/></clipPath><g clip-path="url(#pc4)"><g filter="url(#pb)"><rect x="179.7" y="273.7" width="14.6" height="16.8" fill="#e8dccb"/><path d="M181.89 286.3C180.42999999999998 274.036 193.57 274.036 192.10999999999999 286.3z" fill="#2a1a14"/><ellipse cx="187.0" cy="280.42" rx="3.2119999999999997" ry="4.032" fill="#c08a68"/><path d="M180.42999999999998 290.5C181.16 284.62 192.83999999999997 284.62 193.57 290.5z" fill="#ead9bf"/></g></g><text transform="translate(187.00 296.15) scale(0.1)" font-size="35.500" text-anchor="middle" fill="#2a2a2a">Rebekka Nadori</text><text transform="translate(187.00 301.20) scale(0.1)" font-size="35.500" text-anchor="middle" fill="#4a4a4a">Marketing Managerin</text><text transform="translate(187.00 306.25) scale(0.1)" font-size="35.500" text-anchor="middle" fill="#4a4a4a">-120</text><text transform="translate(187.00 311.30) scale(0.1)" font-size="35.500" text-anchor="middle" fill="#4a4a4a">50.000 €</text><text transform="translate(187.00 316.35) scale(0.1)" font-size="35.500" text-anchor="middle" fill="#4a4a4a">704</text><rect x="203" y="316.8" width="2.200" height="2.200" fill="#111"/><rect x="248.4" y="271.8" width="37.90" height="48.00" rx="1" fill="#fff" stroke="#1c1c1c" stroke-width="1.05"/><clipPath id="pc5"><rect x="260.05" y="273.70" width="14.6" height="16.8"/></clipPath><g clip-path="url(#pc5)"><g filter="url(#pb)"><rect x="260.05" y="273.7" width="14.6" height="16.8" fill="#2e2a26"/><path d="M261.51 288.82C260.05 274.036 274.65000000000003 274.036 273.19 288.82z" fill="#d9b26a"/><ellipse cx="267.058" cy="281.764" rx="3.358" ry="4.2" fill="#e0b08a"/><rect x="262.24" y="287.97999999999996" width="10.219999999999999" height="2.52" fill="#1a1816"/></g></g><text transform="translate(267.35 296.15) scale(0.1)" font-size="35.500" text-anchor="middle" fill="#2a2a2a">Anna-Maria Fichler</text><text transform="translate(267.35 301.20) scale(0.1)" font-size="35.500" text-anchor="middle" fill="#4a4a4a">Personalleiterin</text><text transform="translate(267.35 306.25) scale(0.1)" font-size="35.500" text-anchor="middle" fill="#4a4a4a">-130</text><text transform="translate(267.35 311.30) scale(0.1)" font-size="35.500" text-anchor="middle" fill="#4a4a4a">50.000 €</text><text transform="translate(267.35 316.35) scale(0.1)" font-size="35.500" text-anchor="middle" fill="#4a4a4a">706</text><rect x="283.3" y="316.8" width="2.200" height="2.200" fill="#111"/><rect x="76.4" y="327.4" width="28.10" height="25.80" rx="0.5" fill="#fff" stroke="#1c1c1c" stroke-width="1.05"/><text transform="translate(90.45 331.15) scale(0.1)" font-size="35.500" text-anchor="middle" fill="#2a2a2a">Herbert Gehl</text><text transform="translate(90.45 336.20) scale(0.1)" font-size="35.500" text-anchor="middle" fill="#4a4a4a">Techn. Service</text><text transform="translate(90.45 341.25) scale(0.1)" font-size="35.500" text-anchor="middle" fill="#4a4a4a">-111</text><text transform="translate(90.45 346.30) scale(0.1)" font-size="35.500" text-anchor="middle" fill="#4a4a4a">35.000 €</text><text transform="translate(90.45 351.35) scale(0.1)" font-size="35.500" text-anchor="middle" fill="#4a4a4a">703</text><rect x="108.4" y="327.4" width="28.30" height="25.80" rx="0.5" fill="#fff" stroke="#1c1c1c" stroke-width="1.05"/><text transform="translate(122.55 331.15) scale(0.1)" font-size="35.500" text-anchor="middle" fill="#2a2a2a">Alfred Bichel</text><text transform="translate(122.55 336.20) scale(0.1)" font-size="35.500" text-anchor="middle" fill="#4a4a4a">Administrator</text><text transform="translate(122.55 341.25) scale(0.1)" font-size="35.500" text-anchor="middle" fill="#4a4a4a">-112</text><text transform="translate(122.55 346.30) scale(0.1)" font-size="35.500" text-anchor="middle" fill="#4a4a4a">35.000 €</text><text transform="translate(122.55 351.35) scale(0.1)" font-size="35.500" text-anchor="middle" fill="#4a4a4a">703</text><rect x="140.5" y="327.4" width="28.20" height="25.80" rx="0.5" fill="#fff" stroke="#1c1c1c" stroke-width="1.05"/><text transform="translate(154.60 331.15) scale(0.1)" font-size="35.500" text-anchor="middle" fill="#2a2a2a">Anna Kelski</text><text transform="translate(154.60 336.20) scale(0.1)" font-size="35.500" text-anchor="middle" fill="#4a4a4a">PR</text><text transform="translate(154.60 341.25) scale(0.1)" font-size="35.500" text-anchor="middle" fill="#4a4a4a">-121</text><text transform="translate(154.60 346.30) scale(0.1)" font-size="35.500" text-anchor="middle" fill="#4a4a4a">35.000 €</text><text transform="translate(154.60 351.35) scale(0.1)" font-size="35.500" text-anchor="middle" fill="#4a4a4a">705</text><rect x="172.5" y="327.4" width="28.20" height="25.80" rx="0.5" fill="#fff" stroke="#1c1c1c" stroke-width="1.05"/><text transform="translate(186.60 331.15) scale(0.1)" font-size="35.500" text-anchor="middle" fill="#2a2a2a">Sonja Bach</text><text transform="translate(186.60 336.20) scale(0.1)" font-size="35.500" text-anchor="middle" fill="#4a4a4a">Projekte</text><text transform="translate(186.60 341.25) scale(0.1)" font-size="35.500" text-anchor="middle" fill="#4a4a4a">-122</text><text transform="translate(186.60 346.30) scale(0.1)" font-size="35.500" text-anchor="middle" fill="#4a4a4a">35.000 €</text><text transform="translate(186.60 351.35) scale(0.1)" font-size="35.500" text-anchor="middle" fill="#4a4a4a">705</text><rect x="204.5" y="327.4" width="28.50" height="25.80" rx="0.5" fill="#fff" stroke="#1c1c1c" stroke-width="1.05"/><text transform="translate(218.75 331.15) scale(0.1)" font-size="35.500" text-anchor="middle" fill="#2a2a2a">Heike Zelvi</text><text transform="translate(218.75 336.20) scale(0.1)" font-size="35.500" text-anchor="middle" fill="#4a4a4a">Strategie</text><text transform="translate(218.75 341.25) scale(0.1)" font-size="35.500" text-anchor="middle" fill="#4a4a4a">-123</text><text transform="translate(218.75 346.30) scale(0.1)" font-size="35.500" text-anchor="middle" fill="#4a4a4a">35.000 €</text><text transform="translate(218.75 351.35) scale(0.1)" font-size="35.500" text-anchor="middle" fill="#4a4a4a">705</text><rect x="236.7" y="327.4" width="28.60" height="25.80" rx="0.5" fill="#fff" stroke="#1c1c1c" stroke-width="1.05"/><text transform="translate(251.00 331.15) scale(0.1)" font-size="35.500" text-anchor="middle" fill="#2a2a2a">Klaus Merzer</text><text transform="translate(251.00 336.20) scale(0.1)" font-size="35.500" text-anchor="middle" fill="#4a4a4a">kauf. Personal</text><text transform="translate(251.00 341.25) scale(0.1)" font-size="35.500" text-anchor="middle" fill="#4a4a4a">-131</text><text transform="translate(251.00 346.30) scale(0.1)" font-size="35.500" text-anchor="middle" fill="#4a4a4a">35.000 €</text><text transform="translate(251.00 351.35) scale(0.1)" font-size="35.500" text-anchor="middle" fill="#4a4a4a">707</text><rect x="268.8" y="327.4" width="29.20" height="25.80" rx="0.5" fill="#fff" stroke="#1c1c1c" stroke-width="1.05"/><text transform="translate(283.40 331.15) scale(0.1)" font-size="35.500" text-anchor="middle" fill="#2a2a2a">Gabi Stocker</text><text transform="translate(283.40 336.20) scale(0.1)" font-size="35.500" text-anchor="middle" fill="#4a4a4a">techn. Personal</text><text transform="translate(283.40 341.25) scale(0.1)" font-size="35.500" text-anchor="middle" fill="#4a4a4a">-132</text><text transform="translate(283.40 346.30) scale(0.1)" font-size="35.500" text-anchor="middle" fill="#4a4a4a">35.000 €</text><text transform="translate(283.40 351.35) scale(0.1)" font-size="35.500" text-anchor="middle" fill="#4a4a4a">707</text><circle cx="168" cy="166" r="1.900" fill="#fff" stroke="#222" stroke-width="0.700"/><circle cx="168" cy="189.5" r="1.900" fill="#fff" stroke="#222" stroke-width="0.700"/><circle cx="168" cy="213" r="1.900" fill="#fff" stroke="#222" stroke-width="0.700"/><circle cx="186.8" cy="166" r="1.900" fill="#fff" stroke="#222" stroke-width="0.700"/><circle cx="186.8" cy="213" r="1.900" fill="#fff" stroke="#222" stroke-width="0.700"/><circle cx="205.6" cy="166" r="1.900" fill="#fff" stroke="#222" stroke-width="0.700"/><circle cx="205.6" cy="189.5" r="1.900" fill="#fff" stroke="#222" stroke-width="0.700"/><circle cx="205.6" cy="213" r="1.900" fill="#fff" stroke="#222" stroke-width="0.700"/><rect x="203" y="210.500" width="2.200" height="2.200" fill="#111"/></svg>
<div style="left:360px;top:59px;width:4px;height:401px;background:#b3d5b6;"></div>
<div style="left:364px;top:59.5px;width:1px;height:400.5px;background:#2c4f35;"></div>
<div style="left:365px;top:59px;width:346px;height:1px;background:#97bf9c;"></div>
<div style="left:365px;top:60px;width:346px;height:1px;background:#acd3b0;"></div>
<span class="t ls" style="left:368.3px;top:64px;font-size:8.1px;line-height:10.1px;font-weight:bold;color:#10251a;letter-spacing:0.023px;">Berichte</span>
<div style="left:406px;top:66px;width:277px;height:5px;background:linear-gradient(#8ab890,#7fae87 50%,#88b68e);"></div>
<svg class="ic ti" style="left:689.5px;top:65.5px;" width="5" height="4" viewBox="0 0 5 4"><path d="M0.500 1h4l-2 2.200z" fill="#7faa87"/></svg>
<svg class="ic ti" style="left:698.0px;top:64.3px;" width="6" height="6" viewBox="0 0 6 6"><path d="M1 1l4 4M5 1L1 5" stroke="#10251a" stroke-width="1.400"/></svg>
<div style="left:366.5px;top:75px;width:1.5px;height:385px;background:#2c4f35;"></div>
<div style="left:366.5px;top:75px;width:339.5px;height:1px;background:#2c4f35;"></div>
<div style="left:368px;top:76px;width:299px;height:2px;background:#93bf98;"></div>
<div style="left:368px;top:78px;width:299px;height:13px;background:#fff;border-top:1.200px solid #3f6b49;border-left:1.500px solid #1f3d28;border-right:1px solid #2c4f35;border-bottom:1px solid #c9e2cc;"></div>
<div style="left:656.5px;top:79px;width:10px;height:12px;background:#a3c9a8;border-right:1px solid #2c4f35;border-bottom:1px solid #2c4f35;border-left:1px solid #d3e8d5;border-top:1px solid #d3e8d5;"></div>
<svg class="ic ti" style="left:658.5px;top:83.0px;" width="6" height="5" viewBox="0 0 6 5"><path d="M0.800 1.300h4.400l-2.200 2.400z" fill="#10251a"/></svg>
<span class="t dc" style="left:370.5px;top:81px;font-size:7.3px;line-height:9.3px;font-weight:normal;color:#10251a;letter-spacing:-0.125px;">Bericht1</span>
<div style="left:673px;top:75px;width:33px;height:16.5px;background:#a3c9a8;border:1px solid #1a3322;border-top:1px solid #2c4f35;"></div>
<svg class="ic ti" style="left:677.0px;top:78.0px;" width="13" height="12" viewBox="0 0 13 12"><rect x="1" y="1" width="11" height="10" fill="#fbfbff" stroke="#7a80b0" stroke-width="0.700"/><rect x="1" y="1" width="11" height="2.200" fill="#3a4090"/><path d="M2.500 5h2M5.500 5h2M8.500 5h2M2.500 7h2M5.500 7h2M8.500 7h2M2.500 9h2M5.500 9h2M8.500 9h2" stroke="#5a64c0" stroke-width="1"/></svg>
<svg class="ic ti" style="left:692.0px;top:81.5px;" width="7" height="5" viewBox="0 0 7 5"><path d="M0.500 1h6l-3 3.200z" fill="#10251a"/></svg>
<svg class="ic ti" style="left:374.0px;top:97.0px;" width="14" height="14" viewBox="0 0 14 14"><rect x="3.500" y="1.500" width="7.500" height="4.500" fill="#fdfdfd" stroke="#6a6f78" stroke-width="0.700"/><rect x="1.200" y="5.500" width="12" height="5.500" rx="1.500" fill="#9aa0aa" stroke="#3a3f48" stroke-width="0.900"/><rect x="3" y="9.300" width="8.500" height="3.200" rx="0.800" fill="#f2f2f2" stroke="#4a4f58" stroke-width="0.700"/><rect x="2.300" y="6.300" width="9.800" height="1.400" fill="#e6e9ee"/></svg>
<svg class="ic ti" style="left:389.7px;top:97.0px;" width="14" height="14" viewBox="0 0 14 14"><rect x="5.500" y="1.500" width="7" height="9" fill="#fdfdfd" stroke="#7a7f88" stroke-width="0.700"/><rect x="4" y="2.800" width="6" height="4" fill="#fdfdfd" stroke="#7a7f88" stroke-width="0.600"/><rect x="1.500" y="6" width="9.500" height="5" rx="1.300" fill="#a4aab4" stroke="#4a4f58" stroke-width="0.800"/><rect x="3" y="9.300" width="6.500" height="3" rx="0.600" fill="#f2f2f2" stroke="#5a5f68" stroke-width="0.600"/></svg>
<svg class="ic ti" style="left:406.0px;top:97.0px;" width="14" height="14" viewBox="0 0 14 14"><rect x="2.500" y="2" width="6" height="8" fill="#f0f4fc" stroke="#8aa4d4" stroke-width="0.800"/><path d="M11 2.500v7M11 1.500l-1.200 1.700h2.400zM11 10.500l-1.200-1.700h2.400zM2.500 12h6" stroke="#4a74c4" stroke-width="0.700" fill="#4a74c4"/></svg>
<svg class="ic ti" style="left:421.6px;top:97.0px;" width="14" height="14" viewBox="0 0 14 14"><path d="M2.500 2h4l1.500 1.500v5h-5.500z" fill="#e9f0fc" stroke="#5a7fc4" stroke-width="0.800"/><path d="M6.500 5.500h4l1.500 1.500v5.500h-5.500z" fill="#cfe0fa" stroke="#3b66b8" stroke-width="0.800"/></svg>
<svg class="ic ti" style="left:437.0px;top:97.0px;" width="14" height="14" viewBox="0 0 14 14"><rect x="2" y="2.500" width="10.500" height="9.500" fill="#eaf6ea" stroke="#4a9a56" stroke-width="0.900"/><path d="M4.500 4.700l5 5.200M9.500 4.700l-5 5.200" stroke="#2a8a3a" stroke-width="1.500"/></svg>
<svg class="ic ti" style="left:453.0px;top:97.0px;" width="14" height="14" viewBox="0 0 14 14"><rect x="2" y="2" width="8" height="8" fill="#f4f8ff" stroke="#8a9bb8" stroke-width="0.700"/><path d="M5 6.500h3l.800 1h4v5H5z" fill="#f6d26a" stroke="#b88a1a" stroke-width="0.600"/></svg>
<svg class="ic ti" style="left:469.0px;top:97.0px;" width="14" height="14" viewBox="0 0 14 14"><rect x="2" y="2" width="8" height="9" fill="#f4f8ff" stroke="#8a9bb8" stroke-width="0.700"/><path d="M3.500 4.500h5M3.500 6.500h5" stroke="#5a7fc4" stroke-width="0.700"/><path d="M12.500 4l-5 6.500-1.800.800.500-1.900 5-6.400z" fill="#e8b86a" stroke="#8a5a1a" stroke-width="0.500"/></svg>
<div style="left:368px;top:114px;width:326.5px;height:11px;background:linear-gradient(#a6cfaa,#8fbc95);border-top:1px solid #86b38c;border-bottom:1px solid #2f5a3a;"></div>
<div style="left:501px;top:115px;width:1px;height:9px;background:#6f9f77;"></div>
<div style="left:634px;top:115px;width:1px;height:9px;background:#6f9f77;"></div>
<div style="left:502px;top:115px;width:1px;height:9px;background:#b9d9bc;"></div>
<div style="left:635px;top:115px;width:1px;height:9px;background:#b9d9bc;"></div>
<span class="t dc" style="left:370px;top:116px;font-size:7.7px;line-height:9.7px;font-weight:normal;color:#0a1a10;-webkit-text-stroke:0.300px #0a1a10;letter-spacing:0.206px;">Abteilung</span>
<span class="t dc" style="left:503.8px;top:116px;font-size:7.7px;line-height:9.7px;font-weight:normal;color:#0a1a10;-webkit-text-stroke:0.300px #0a1a10;letter-spacing:0.365px;">Name</span>
<span class="t dc" style="left:636.8px;top:116px;font-size:7.7px;line-height:9.7px;font-weight:normal;color:#0a1a10;-webkit-text-stroke:0.300px #0a1a10;letter-spacing:0.315px;">Gehalt</span>
<div style="left:368px;top:125px;width:326.5px;height:334px;background:#fff;overflow:hidden">
<div style="left:0px;top:10px;width:326.5px;height:1px;background:#d9dbd9;"></div>
<span class="t dj" style="left:2.1999999999999886px;top:3px;font-size:7.3px;line-height:9.3px;font-weight:bold;color:#111;-webkit-text-stroke:0.100px #111;letter-spacing:0.021px;">Assistent</span>
<div style="left:0px;top:22px;width:326.5px;height:1px;background:#d9dbd9;"></div>
<span class="t dj" style="left:135.8px;top:14px;font-size:7.3px;line-height:9.3px;font-weight:bold;color:#111;-webkit-text-stroke:0.100px #111;letter-spacing:0.023px;">Maurice Herzog</span>
<div style="left:0px;top:34px;width:326.5px;height:1px;background:#d9dbd9;"></div>
<span class="t dj" style="left:135.8px;top:24px;font-size:9.3px;line-height:11.3px;font-weight:bold;color:#2c2c2c;-webkit-text-stroke:0;letter-spacing:-0.246px;">Gruppen-Gesamtsumme</span>
<span class="t dj" style="left:268.79999999999995px;top:24px;font-size:9.3px;line-height:11.3px;font-weight:bold;color:#222;-webkit-text-stroke:0;letter-spacing:-0.352px;">30.000 €</span>
<div style="left:0px;top:46px;width:326.5px;height:1px;background:#d9dbd9;"></div>
<span class="t dj" style="left:2.1999999999999886px;top:36px;font-size:9.3px;line-height:11.3px;font-weight:bold;color:#2c2c2c;-webkit-text-stroke:0;letter-spacing:-0.246px;">Gruppen-Gesamtsumme</span>
<span class="t dj" style="left:268.79999999999995px;top:36px;font-size:9.3px;line-height:11.3px;font-weight:bold;color:#222;-webkit-text-stroke:0;letter-spacing:-0.352px;">30.000 €</span>
<div style="left:0px;top:57px;width:326.5px;height:1px;background:#d9dbd9;"></div>
<span class="t dj" style="left:2.1999999999999886px;top:50px;font-size:7.3px;line-height:9.3px;font-weight:bold;color:#111;-webkit-text-stroke:0.100px #111;letter-spacing:0.028px;">CEO</span>
<div style="left:0px;top:69px;width:326.5px;height:1px;background:#d9dbd9;"></div>
<span class="t dj" style="left:135.8px;top:61px;font-size:7.3px;line-height:9.3px;font-weight:bold;color:#111;-webkit-text-stroke:0.100px #111;letter-spacing:0.020px;">Silvia Becker</span>
<div style="left:0px;top:81px;width:326.5px;height:1px;background:#d9dbd9;"></div>
<span class="t dj" style="left:135.8px;top:71px;font-size:9.3px;line-height:11.3px;font-weight:bold;color:#2c2c2c;-webkit-text-stroke:0;letter-spacing:-0.246px;">Gruppen-Gesamtsumme</span>
<span class="t dj" style="left:268.79999999999995px;top:71px;font-size:9.3px;line-height:11.3px;font-weight:bold;color:#222;-webkit-text-stroke:0;letter-spacing:-0.357px;">150.000 €</span>
<div style="left:0px;top:93px;width:326.5px;height:1px;background:#d9dbd9;"></div>
<span class="t dj" style="left:2.1999999999999886px;top:83px;font-size:9.3px;line-height:11.3px;font-weight:bold;color:#2c2c2c;-webkit-text-stroke:0;letter-spacing:-0.246px;">Gruppen-Gesamtsumme</span>
<span class="t dj" style="left:268.79999999999995px;top:83px;font-size:9.3px;line-height:11.3px;font-weight:bold;color:#222;-webkit-text-stroke:0;letter-spacing:-0.357px;">150.000 €</span>
<div style="left:0px;top:104px;width:326.5px;height:1px;background:#d9dbd9;"></div>
<span class="t dj" style="left:2.1999999999999886px;top:97px;font-size:7.3px;line-height:9.3px;font-weight:bold;color:#111;-webkit-text-stroke:0.100px #111;letter-spacing:0.023px;">Marketing</span>
<div style="left:0px;top:116px;width:326.5px;height:1px;background:#d9dbd9;"></div>
<span class="t dj" style="left:135.8px;top:108px;font-size:7.3px;line-height:9.3px;font-weight:bold;color:#111;-webkit-text-stroke:0.100px #111;letter-spacing:0.023px;">Sonja Bach</span>
<div style="left:0px;top:128px;width:326.5px;height:1px;background:#d9dbd9;"></div>
<span class="t dj" style="left:135.8px;top:118px;font-size:9.3px;line-height:11.3px;font-weight:bold;color:#2c2c2c;-webkit-text-stroke:0;letter-spacing:-0.246px;">Gruppen-Gesamtsumme</span>
<span class="t dj" style="left:268.79999999999995px;top:118px;font-size:9.3px;line-height:11.3px;font-weight:bold;color:#222;-webkit-text-stroke:0;letter-spacing:-0.352px;">35.000 €</span>
<div style="left:0px;top:140px;width:326.5px;height:1px;background:#d9dbd9;"></div>
<span class="t dj" style="left:135.8px;top:132px;font-size:7.3px;line-height:9.3px;font-weight:bold;color:#111;-webkit-text-stroke:0.100px #111;letter-spacing:0.022px;">Anna Kelski</span>
<div style="left:0px;top:152px;width:326.5px;height:1px;background:#d9dbd9;"></div>
<span class="t dj" style="left:135.8px;top:142px;font-size:9.3px;line-height:11.3px;font-weight:bold;color:#2c2c2c;-webkit-text-stroke:0;letter-spacing:-0.246px;">Gruppen-Gesamtsumme</span>
<span class="t dj" style="left:268.79999999999995px;top:142px;font-size:9.3px;line-height:11.3px;font-weight:bold;color:#222;-webkit-text-stroke:0;letter-spacing:-0.352px;">35.000 €</span>
<div style="left:0px;top:163px;width:326.5px;height:1px;background:#d9dbd9;"></div>
<span class="t dj" style="left:135.8px;top:156px;font-size:7.3px;line-height:9.3px;font-weight:bold;color:#111;-webkit-text-stroke:0.100px #111;letter-spacing:0.023px;">Rebekka Nadori</span>
<div style="left:0px;top:175px;width:326.5px;height:1px;background:#d9dbd9;"></div>
<span class="t dj" style="left:135.8px;top:165px;font-size:9.3px;line-height:11.3px;font-weight:bold;color:#2c2c2c;-webkit-text-stroke:0;letter-spacing:-0.246px;">Gruppen-Gesamtsumme</span>
<span class="t dj" style="left:268.79999999999995px;top:165px;font-size:9.3px;line-height:11.3px;font-weight:bold;color:#222;-webkit-text-stroke:0;letter-spacing:-0.352px;">50.000 €</span>
<div style="left:0px;top:187px;width:326.5px;height:1px;background:#d9dbd9;"></div>
<span class="t dj" style="left:135.8px;top:179px;font-size:7.3px;line-height:9.3px;font-weight:bold;color:#111;-webkit-text-stroke:0.100px #111;letter-spacing:0.021px;">Heike Zelvi</span>
<div style="left:0px;top:199px;width:326.5px;height:1px;background:#d9dbd9;"></div>
<span class="t dj" style="left:135.8px;top:189px;font-size:9.3px;line-height:11.3px;font-weight:bold;color:#2c2c2c;-webkit-text-stroke:0;letter-spacing:-0.246px;">Gruppen-Gesamtsumme</span>
<span class="t dj" style="left:268.79999999999995px;top:189px;font-size:9.3px;line-height:11.3px;font-weight:bold;color:#222;-webkit-text-stroke:0;letter-spacing:-0.352px;">35.000 €</span>
<div style="left:0px;top:210px;width:326.5px;height:1px;background:#d9dbd9;"></div>
<span class="t dj" style="left:2.1999999999999886px;top:200px;font-size:9.3px;line-height:11.3px;font-weight:bold;color:#2c2c2c;-webkit-text-stroke:0;letter-spacing:-0.246px;">Gruppen-Gesamtsumme</span>
<span class="t dj" style="left:268.79999999999995px;top:200px;font-size:9.3px;line-height:11.3px;font-weight:bold;color:#222;-webkit-text-stroke:0;letter-spacing:-0.357px;">155.000 €</span>
<div style="left:0px;top:222px;width:326.5px;height:1px;background:#d9dbd9;"></div>
<span class="t dj" style="left:2.1999999999999886px;top:214px;font-size:7.3px;line-height:9.3px;font-weight:bold;color:#111;-webkit-text-stroke:0.100px #111;letter-spacing:0.022px;">Personal</span>
<div style="left:0px;top:234px;width:326.5px;height:1px;background:#d9dbd9;"></div>
<span class="t dj" style="left:135.8px;top:226px;font-size:7.3px;line-height:9.3px;font-weight:bold;color:#111;-webkit-text-stroke:0.100px #111;letter-spacing:0.022px;">Anna-Maria Fichler</span>
<div style="left:0px;top:246px;width:326.5px;height:1px;background:#d9dbd9;"></div>
<span class="t dj" style="left:135.8px;top:236px;font-size:9.3px;line-height:11.3px;font-weight:bold;color:#2c2c2c;-webkit-text-stroke:0;letter-spacing:-0.246px;">Gruppen-Gesamtsumme</span>
<span class="t dj" style="left:268.79999999999995px;top:236px;font-size:9.3px;line-height:11.3px;font-weight:bold;color:#222;-webkit-text-stroke:0;letter-spacing:-0.352px;">50.000 €</span>
<div style="left:0px;top:257px;width:326.5px;height:1px;background:#d9dbd9;"></div>
<span class="t dj" style="left:135.8px;top:250px;font-size:7.3px;line-height:9.3px;font-weight:bold;color:#111;-webkit-text-stroke:0.100px #111;letter-spacing:0.022px;">Klaus Merzer</span>
<div style="left:0px;top:269px;width:326.5px;height:1px;background:#d9dbd9;"></div>
<span class="t dj" style="left:135.8px;top:259px;font-size:9.3px;line-height:11.3px;font-weight:bold;color:#2c2c2c;-webkit-text-stroke:0;letter-spacing:-0.246px;">Gruppen-Gesamtsumme</span>
<span class="t dj" style="left:268.79999999999995px;top:259px;font-size:9.3px;line-height:11.3px;font-weight:bold;color:#222;-webkit-text-stroke:0;letter-spacing:-0.352px;">35.000 €</span>
<div style="left:0px;top:281px;width:326.5px;height:1px;background:#d9dbd9;"></div>
<span class="t dj" style="left:135.8px;top:273px;font-size:7.3px;line-height:9.3px;font-weight:bold;color:#111;-webkit-text-stroke:0.100px #111;letter-spacing:0.022px;">Gabi Stocker</span>
<div style="left:0px;top:293px;width:326.5px;height:1px;background:#d9dbd9;"></div>
<span class="t dj" style="left:135.8px;top:283px;font-size:9.3px;line-height:11.3px;font-weight:bold;color:#2c2c2c;-webkit-text-stroke:0;letter-spacing:-0.246px;">Gruppen-Gesamtsumme</span>
<span class="t dj" style="left:268.79999999999995px;top:283px;font-size:9.3px;line-height:11.3px;font-weight:bold;color:#222;-webkit-text-stroke:0;letter-spacing:-0.352px;">35.000 €</span>
<div style="left:0px;top:305px;width:326.5px;height:1px;background:#d9dbd9;"></div>
<span class="t dj" style="left:2.1999999999999886px;top:295px;font-size:9.3px;line-height:11.3px;font-weight:bold;color:#2c2c2c;-webkit-text-stroke:0;letter-spacing:-0.246px;">Gruppen-Gesamtsumme</span>
<span class="t dj" style="left:268.79999999999995px;top:295px;font-size:9.3px;line-height:11.3px;font-weight:bold;color:#222;-webkit-text-stroke:0;letter-spacing:-0.357px;">120.000 €</span>
<div style="left:0px;top:316px;width:326.5px;height:1px;background:#d9dbd9;"></div>
<span class="t dj" style="left:2.1999999999999886px;top:309px;font-size:7.3px;line-height:9.3px;font-weight:bold;color:#111;-webkit-text-stroke:0.100px #111;letter-spacing:0.022px;">Technik</span>
<div style="left:0px;top:328px;width:326.5px;height:1px;background:#d9dbd9;"></div>
<span class="t dj" style="left:135.8px;top:320px;font-size:7.3px;line-height:9.3px;font-weight:bold;color:#111;-webkit-text-stroke:0.100px #111;letter-spacing:0.022px;">Herbert Gehl</span>
<div style="left:0px;top:340px;width:326.5px;height:1px;background:#d9dbd9;"></div>
<span class="t dj" style="left:135.8px;top:330px;font-size:9.3px;line-height:11.3px;font-weight:bold;color:#2c2c2c;-webkit-text-stroke:0;letter-spacing:-0.246px;">Gruppen-Gesamtsumme</span>
<span class="t dj" style="left:268.79999999999995px;top:330px;font-size:9.3px;line-height:11.3px;font-weight:bold;color:#222;-webkit-text-stroke:0;letter-spacing:-0.352px;">35.000 €</span>
<div style="left:133px;top:0px;width:1px;height:340px;background:#d2d4d2;"></div>
<div style="left:266px;top:0px;width:1px;height:340px;background:#d2d4d2;"></div>
</div>
<div style="left:694.5px;top:114.5px;width:11px;height:345px;background:#cde5d0;"></div>
<div style="left:695px;top:115px;width:11px;height:9px;background:#a3c9a8;border-right:1px solid #2c4f35;border-bottom:1px solid #2c4f35;border-left:1px solid #d3e8d5;border-top:1px solid #d3e8d5;"></div>
<svg class="ic ti" style="left:697.5px;top:117.0px;" width="6" height="5" viewBox="0 0 6 5"><path d="M1 3.700h4l-2-2.200z" fill="#10251a"/></svg>
<div style="left:695px;top:124px;width:11px;height:251px;background:linear-gradient(90deg,#a6cfaa,#8fbc95);border-right:1px solid #2c4f35;border-bottom:1px solid #2c4f35;border-left:1px solid #d3e8d5;"></div>
<div style="left:695px;top:449px;width:11px;height:10px;background:#a3c9a8;border-right:1px solid #2c4f35;border-bottom:1px solid #2c4f35;border-left:1px solid #d3e8d5;border-top:1px solid #d3e8d5;"></div>
<svg class="ic ti" style="left:697.5px;top:451.5px;" width="6" height="5" viewBox="0 0 6 5"><path d="M1 1.500h4l-2 2.200z" fill="#10251a"/></svg>
<div style="left:1px;top:460px;width:710px;height:3px;background:#b7d8ba;"></div>
</body></html>
